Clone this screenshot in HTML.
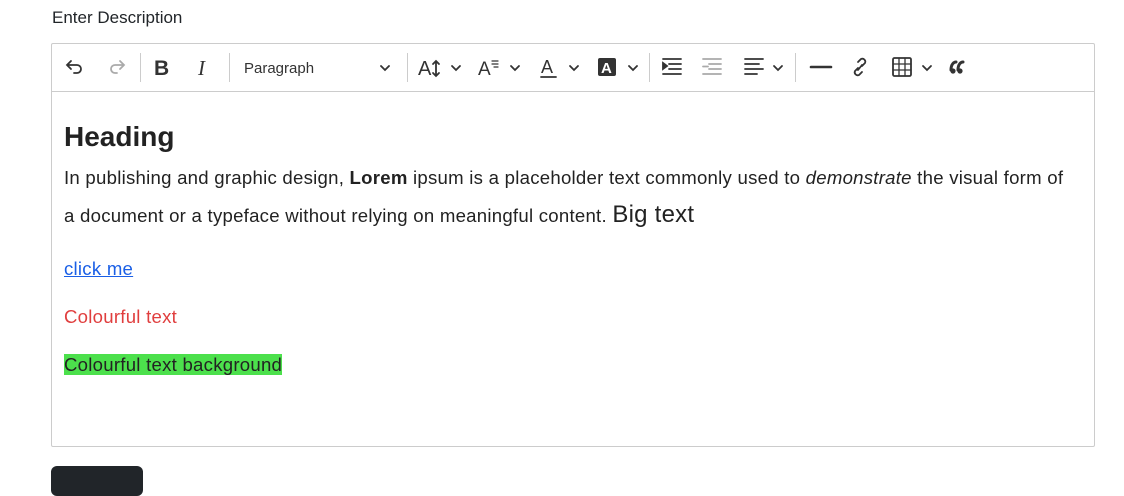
<!DOCTYPE html>
<html><head><style>
body{margin:0;width:1124px;height:476px;overflow:hidden;background:#fff;font-family:"Liberation Sans",sans-serif;color:#212529;position:relative}
.lbl{position:absolute;left:52px;top:8px;font-size:17px}
.ed{position:absolute;left:51px;top:43px;width:1042px;height:402px;border:1px solid #ccc;border-radius:2px}
.tb{height:47px;border-bottom:1px solid #ccc;position:relative}
.tb svg{position:absolute;top:0}
.sep{position:absolute;top:9px;width:1px;height:29px;background:#ccc}
.ct{position:absolute;left:12px;top:75px;right:20px;font-size:18.6px;letter-spacing:0.25px;color:#222}
h1{font-size:28px;margin:0 0 4px;font-weight:bold;line-height:36px;letter-spacing:0}
p{margin:0}
.btn{position:absolute;left:51px;top:466px;width:92px;height:30px;background:#212529;border-radius:6px}
</style></head><body>
<div class="lbl">Enter Description</div>
<div class="ed">
<div class="tb">
<svg width="1042" height="47" fill="none" stroke="#333" stroke-width="1.8" stroke-linecap="round">
<path d="M19 17l-4 4 4 4M15 21h10a4 4 0 0 1 0 8h-3"/>
<path d="M68 17l4 4-4 4M72 21h-9a4 4 0 0 0 0 8h2" stroke="#aaa"/>
<text x="102" y="31" font-size="21" font-weight="bold" fill="#333" stroke="none" font-family="Liberation Sans">B</text>
<text x="146" y="31" font-size="21" font-style="italic" fill="#333" stroke="none" font-family="Liberation Serif">I</text>
<text x="192" y="29" font-size="15" fill="#333" stroke="none" font-family="Liberation Sans">Paragraph</text>
<path d="M329 22l4 4 4-4"/>
<text x="366" y="31" font-size="20" fill="#333" stroke="none">A</text>
<path d="M384 17v15M381 20l3-3 3 3M381 29l3 3 3-3"/>
<path d="M400 22l4 4 4-4"/>
<text x="426" y="31" font-size="19" fill="#333" stroke="none">A</text>
<path d="M440 17h6M440 20h6M442 23h4" stroke-width="1.2"/>
<path d="M459 22l4 4 4-4"/>
<text x="489" y="29" font-size="18" fill="#333" stroke="none">A</text>
<path d="M489 33h15"/>
<path d="M518 22l4 4 4-4"/>
<rect x="546" y="14" width="18" height="18" rx="2" fill="#333" stroke="none"/>
<text x="549" y="29" font-size="15" font-weight="bold" fill="#fff" stroke="none">A</text>
<path d="M577 22l4 4 4-4"/>
<path d="M611 15h18M617 20h12M617 25h12M611 30h18" /><path d="M611 19l4 3-4 3z" fill="#333"/>
<path d="M651 15h18M657 20h12M657 25h12M651 30h18M656 22.5h-5" stroke="#aaa"/>
<path d="M693 15h18M693 20h14M693 25h18M693 30h12"/>
<path d="M722 22l4 4 4-4"/>
<path d="M759 23h20" stroke-width="2.6"/>
<path d="M806 24l-3 3a3 3 0 0 0 4 4l3-3M810 22l3-3a3 3 0 0 0-4-4l-3 3M806 26l4-5"/>
<rect x="841" y="14" width="18" height="18" rx="1.5"/><path d="M841 20h18M841 26h18M847 14v18M853 14v18" stroke-width="1.3"/>
<path d="M871 22l4 4 4-4"/>
<path d="M899 26c0-6 3-8 5-8M906 26c0-6 3-8 5-8" stroke-width="3"/><circle cx="901" cy="27" r="2.6" fill="#333" stroke="none"/><circle cx="908" cy="27" r="2.6" fill="#333" stroke="none"/>
</svg>
<div class="sep" style="left:88px"></div><div class="sep" style="left:177px"></div><div class="sep" style="left:355px"></div><div class="sep" style="left:597px"></div><div class="sep" style="left:743px"></div>
</div>
<div class="ct">
<h1>Heading</h1>
<p style="line-height:37px">In publishing and graphic design, <b>Lorem</b> ipsum is a placeholder text commonly used to <i>demonstrate</i> the visual form of a document or a typeface without relying on meaningful content. <span style="font-size:24px">Big text</span></p>
<p style="margin-top:23px;line-height:24px"><a href="#" style="color:#1a5fe6">click me</a></p>
<p style="margin-top:24px;line-height:24px;color:#e03e3e">Colourful text</p>
<p style="margin-top:24px;line-height:24px"><span style="background:#4ce04c">Colourful text background</span></p>
</div>
</div>
<div class="btn"></div>
</body></html>
